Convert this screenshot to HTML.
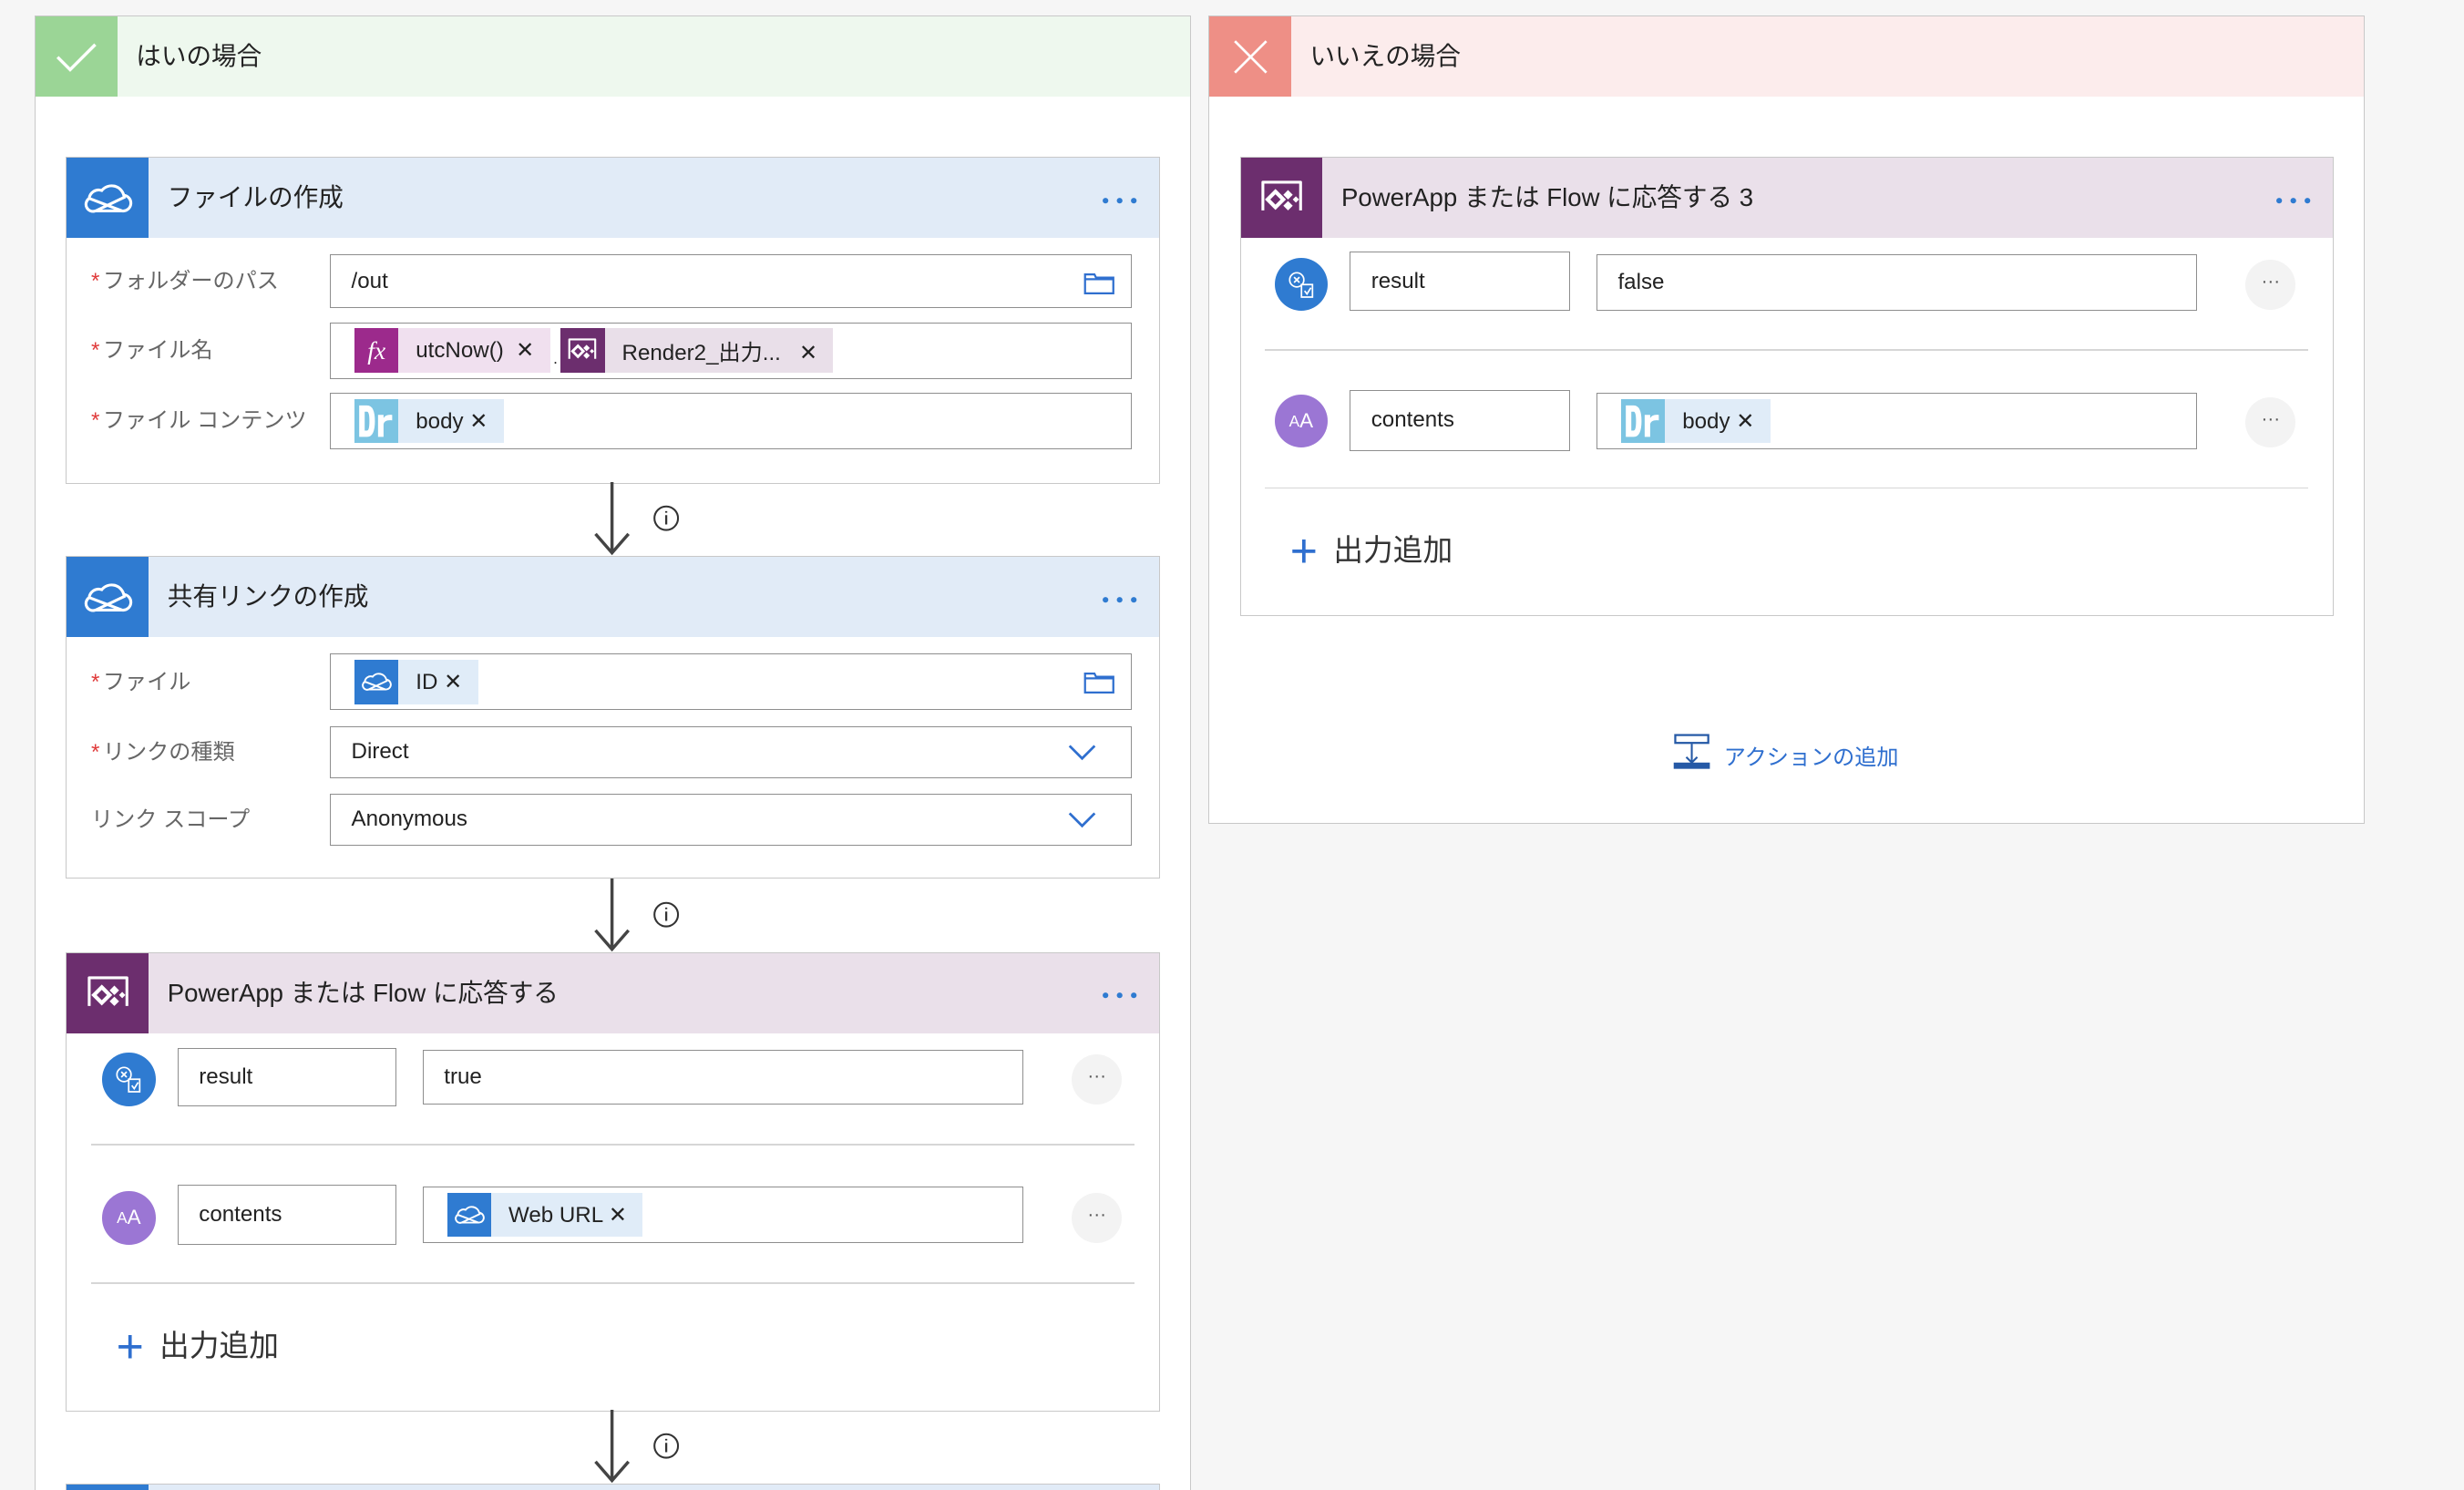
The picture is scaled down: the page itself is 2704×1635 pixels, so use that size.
<!DOCTYPE html>
<html><head><meta charset="utf-8"><style>
html,body{margin:0;padding:0;background:#f6f6f6;}
#w{position:relative;width:1568px;height:948px;zoom:1.72449;overflow:hidden;font-family:"Liberation Sans","Noto Sans CJK JP",sans-serif;color:#222;}
.a{position:absolute;box-sizing:border-box;}
.box{position:absolute;box-sizing:border-box;background:#fff;border:1px solid #c8c8c8;}
.hdr{position:absolute;left:0;right:0;top:0;height:51px;}
.ic{position:absolute;left:0;top:0;width:52px;height:51px;display:flex;align-items:center;justify-content:center;}
.ttl{position:absolute;left:64px;top:0;line-height:51px;font-size:16px;color:#222;}
.dots{position:absolute;right:13px;top:24px;}
.lbl{position:absolute;font-size:14px;color:#666;}
.lbl b{color:#e03a3a;font-weight:normal;margin-right:2px;}
.inp{position:absolute;box-sizing:border-box;border:1px solid #8e8e8e;background:#fff;font-size:14px;padding-left:13px;display:flex;align-items:center;}
.tok{display:inline-flex;align-items:center;height:28px;font-size:14px;margin-right:2px;}
.tok .ti{width:28px;height:28px;display:flex;align-items:center;justify-content:center;}
.tok .tt{padding:0 10px 0 11px;height:28px;display:flex;align-items:center;}
.circ{position:absolute;width:34px;height:34px;border-radius:50%;display:flex;align-items:center;justify-content:center;}
.eb{position:absolute;width:32px;height:32px;border-radius:50%;background:#f3f3f3;color:#555;font-size:12px;text-align:center;line-height:28px;}
.sep{position:absolute;height:1px;background:#d6d6d6;}
.plus{position:absolute;font-size:19px;color:#333;}
.plus span{color:#2f6fcf;font-size:30px;font-weight:200;vertical-align:-4px;margin-right:10px;}
</style></head><body><div id="w">

<svg width="0" height="0" style="position:absolute"><defs>
<symbol id="cloud" viewBox="0 0 32 24"><path d="M8 20 H25 A5 5 0 0 0 26 10 A8 8 0 0 0 12 7 A6 6 0 0 0 4 12 A4.5 4.5 0 0 0 8 20 Z M4 12 L25 20 M27 11 L8 20" fill="none" stroke="#fff" stroke-width="1.8"/></symbol>
<symbol id="pa" viewBox="0 0 32 28"><path d="M4 22 V4 H28 V22" fill="none" stroke="#fff" stroke-width="1.8" stroke-linejoin="round"/><path d="M12 10 L17 15 L12 20 L7 15 Z" fill="none" stroke="#fff" stroke-width="2.4"/><path d="M20 9 L23 12 L20 15 L17 12 Z M20 16 L23 19 L20 22 L17 19 Z M25 13 L27 15 L25 17 L23 15Z" fill="#fff"/></symbol>
<symbol id="dr" viewBox="0 0 28 28"><rect width="28" height="28" fill="#7cc4e2"/><path d="M3 4 H8 Q13 4 13 14 Q13 24 8 24 H3 Z M6.5 8 V20 H8 Q9.5 20 9.5 14 Q9.5 8 8 8Z" fill="#fff" fill-rule="evenodd"/><path d="M15 24 V10 H18.5 V12 Q20 9.5 24 10 V13.5 Q19 13 18.5 16 V24Z" fill="#fff"/></symbol>
<symbol id="dt" viewBox="0 0 24 6"><circle cx="3" cy="3" r="1.8" fill="#2f7bd1"/><circle cx="12" cy="3" r="1.8" fill="#2f7bd1"/><circle cx="21" cy="3" r="1.8" fill="#2f7bd1"/></symbol>
</defs></svg>

<!-- LEFT BRANCH -->
<div class="box" style="left:22px;top:10px;width:736px;height:960px;">
 <div class="hdr" style="background:#eef8ee;"><div class="ic" style="background:#9bd596;"><svg width="30" height="24"><path d="M3 12 L11 20 L27 4" fill="none" stroke="#fff" stroke-width="2"/></svg></div><div class="ttl">はいの場合</div></div>
</div>

<!-- card 1 -->
<div class="box" style="left:42px;top:100px;width:696px;height:208px;">
 <div class="hdr" style="background:#e1ebf7;"><div class="ic" style="background:#2f7bd1;"><svg width="32" height="24"><use href="#cloud"/></svg></div><div class="ttl">ファイルの作成</div><svg class="dots" width="24" height="6"><use href="#dt"/></svg></div>
</div>
<div class="lbl" style="left:58px;top:167px;"><b>*</b>フォルダーのパス</div>
<div class="inp" style="left:210px;top:162px;width:510px;height:34px;">/out<svg class="a" style="right:10px;top:9px" width="20" height="16"><path d="M1 3 H7 L8 5 H19 V15 H1 Z M1 6 H19" fill="none" stroke="#2f6fcf" stroke-width="1.3"/></svg></div>
<div class="lbl" style="left:58px;top:211px;"><b>*</b>ファイル名</div>
<div class="inp" style="left:210px;top:205px;width:510px;height:36px;padding-left:15px;">
 <span class="tok" style="background:#f0e0ef;"><span class="ti" style="background:#9c2a8c;color:#fff;font-family:'Liberation Serif',serif;font-style:italic;font-size:16px;">fx</span><span class="tt">utcNow() &nbsp;✕</span></span><span style="font-size:10px;align-self:flex-end;margin:0 2px 6px 0">.</span><span class="tok" style="background:#e9dfe9;"><span class="ti" style="background:#6c2e6e;"><svg width="22" height="20"><use href="#pa"/></svg></span><span class="tt">Render2_出力... &nbsp;&nbsp;✕</span></span>
</div>
<div class="lbl" style="left:58px;top:256px;"><b>*</b>ファイル コンテンツ</div>
<div class="inp" style="left:210px;top:250px;width:510px;height:36px;padding-left:15px;"><span class="tok" style="background:#e0ecf8;"><span class="ti"><svg width="28" height="28"><use href="#dr"/></svg></span><span class="tt">body ✕</span></span></div>

<svg class="a" style="left:370px;top:307px" width="80" height="48"><path d="M19.5 0 V45 M9 33 L19.5 45 L30 33" fill="none" stroke="#444" stroke-width="2"/><circle cx="54" cy="23" r="7.5" fill="none" stroke="#333" stroke-width="1.2"/><path d="M54 21 V27 M54 18.5 V19.5" stroke="#333" stroke-width="1.3"/></svg>

<!-- card 2 -->
<div class="box" style="left:42px;top:354px;width:696px;height:205px;">
 <div class="hdr" style="background:#e1ebf7;"><div class="ic" style="background:#2f7bd1;"><svg width="32" height="24"><use href="#cloud"/></svg></div><div class="ttl">共有リンクの作成</div><svg class="dots" width="24" height="6"><use href="#dt"/></svg></div>
</div>
<div class="lbl" style="left:58px;top:422px;"><b>*</b>ファイル</div>
<div class="inp" style="left:210px;top:416px;width:510px;height:36px;padding-left:15px;"><span class="tok" style="background:#e0ecf8;"><span class="ti" style="background:#2f7bd1;"><svg width="20" height="15"><use href="#cloud"/></svg></span><span class="tt">ID ✕</span></span><svg class="a" style="right:10px;top:9px" width="20" height="16"><path d="M1 3 H7 L8 5 H19 V15 H1 Z M1 6 H19" fill="none" stroke="#2f6fcf" stroke-width="1.3"/></svg></div>
<div class="lbl" style="left:58px;top:467px;"><b>*</b>リンクの種類</div>
<div class="inp" style="left:210px;top:462px;width:510px;height:33px;">Direct<svg class="a" style="right:22px;top:10px" width="18" height="12"><path d="M1 2 L9 10 L17 2" fill="none" stroke="#2f6fcf" stroke-width="1.6"/></svg></div>
<div class="lbl" style="left:58px;top:510px;">リンク スコープ</div>
<div class="inp" style="left:210px;top:505px;width:510px;height:33px;">Anonymous<svg class="a" style="right:22px;top:10px" width="18" height="12"><path d="M1 2 L9 10 L17 2" fill="none" stroke="#2f6fcf" stroke-width="1.6"/></svg></div>

<svg class="a" style="left:370px;top:559px" width="80" height="48"><path d="M19.5 0 V45 M9 33 L19.5 45 L30 33" fill="none" stroke="#444" stroke-width="2"/><circle cx="54" cy="23" r="7.5" fill="none" stroke="#333" stroke-width="1.2"/><path d="M54 21 V27 M54 18.5 V19.5" stroke="#333" stroke-width="1.3"/></svg>

<!-- card 3 -->
<div class="box" style="left:42px;top:606px;width:696px;height:292px;">
 <div class="hdr" style="background:#eae0ea;"><div class="ic" style="background:#6c2e6e;"><svg width="32" height="28"><use href="#pa"/></svg></div><div class="ttl">PowerApp または Flow に応答する</div><svg class="dots" width="24" height="6"><use href="#dt"/></svg></div>
</div>
<div class="circ" style="left:65px;top:670px;background:#2f7bd1;"><svg width="20" height="20"><circle cx="7" cy="7" r="4.5" fill="none" stroke="#fff" stroke-width="1"/><path d="M5.3 5.3 L8.7 8.7 M8.7 5.3 L5.3 8.7" stroke="#fff"/><path d="M10 10 H17 V18 H10 Z M12 14 L13.5 16 L16 12" fill="none" stroke="#fff" stroke-width="1"/></svg></div>
<div class="inp" style="left:113px;top:667px;width:139px;height:37px;">result</div>
<div class="inp" style="left:269px;top:668px;width:382px;height:35px;">true</div>
<div class="eb" style="left:682px;top:671px;">···</div>
<div class="sep" style="left:58px;top:728px;width:664px;"></div>
<div class="circ" style="left:65px;top:758px;background:#9b76d4;color:#fff;font-size:13px;"><span style="font-size:10px">A</span>A</div>
<div class="inp" style="left:113px;top:754px;width:139px;height:38px;">contents</div>
<div class="inp" style="left:269px;top:755px;width:382px;height:36px;padding-left:15px;"><span class="tok" style="background:#e0ecf8;"><span class="ti" style="background:#2f7bd1;"><svg width="20" height="15"><use href="#cloud"/></svg></span><span class="tt">Web URL ✕</span></span></div>
<div class="eb" style="left:682px;top:759px;">···</div>
<div class="sep" style="left:58px;top:816px;width:664px;"></div>
<div class="plus" style="left:74px;top:839px;"><span>+</span>出力追加</div>

<svg class="a" style="left:370px;top:897px" width="80" height="48"><path d="M19.5 0 V45 M9 33 L19.5 45 L30 33" fill="none" stroke="#444" stroke-width="2"/><circle cx="54" cy="23" r="7.5" fill="none" stroke="#333" stroke-width="1.2"/><path d="M54 21 V27 M54 18.5 V19.5" stroke="#333" stroke-width="1.3"/></svg>
<div class="box" style="left:42px;top:944px;width:696px;height:30px;border-top:1px solid #c8c8c8;"><div class="a" style="left:0;top:0;width:52px;height:10px;background:#2f7bd1"></div><div class="a" style="left:52px;right:0;top:0;height:10px;background:#e1ebf7"></div></div>

<!-- RIGHT BRANCH -->
<div class="box" style="left:769px;top:10px;width:736px;height:514px;">
 <div class="hdr" style="background:#fcecec;"><div class="ic" style="background:#ee8f86;"><svg width="26" height="26"><path d="M3 3 L23 23 M23 3 L3 23" stroke="#fff" stroke-width="1.6"/></svg></div><div class="ttl">いいえの場合</div></div>
</div>
<div class="box" style="left:789px;top:100px;width:696px;height:292px;">
 <div class="hdr" style="background:#eae0ea;"><div class="ic" style="background:#6c2e6e;"><svg width="32" height="28"><use href="#pa"/></svg></div><div class="ttl">PowerApp または Flow に応答する 3</div><svg class="dots" width="24" height="6"><use href="#dt"/></svg></div>
</div>
<div class="circ" style="left:811px;top:164px;background:#2f7bd1;"><svg width="20" height="20"><circle cx="7" cy="7" r="4.5" fill="none" stroke="#fff" stroke-width="1"/><path d="M5.3 5.3 L8.7 8.7 M8.7 5.3 L5.3 8.7" stroke="#fff"/><path d="M10 10 H17 V18 H10 Z M12 14 L13.5 16 L16 12" fill="none" stroke="#fff" stroke-width="1"/></svg></div>
<div class="inp" style="left:859px;top:160px;width:140px;height:38px;">result</div>
<div class="inp" style="left:1016px;top:162px;width:382px;height:36px;">false</div>
<div class="eb" style="left:1429px;top:165px;">···</div>
<div class="sep" style="left:805px;top:222px;width:664px;"></div>
<div class="circ" style="left:811px;top:251px;background:#9b76d4;color:#fff;font-size:13px;"><span style="font-size:10px">A</span>A</div>
<div class="inp" style="left:859px;top:248px;width:140px;height:39px;">contents</div>
<div class="inp" style="left:1016px;top:250px;width:382px;height:36px;padding-left:15px;"><span class="tok" style="background:#e0ecf8;"><span class="ti"><svg width="28" height="28"><use href="#dr"/></svg></span><span class="tt">body ✕</span></span></div>
<div class="eb" style="left:1429px;top:253px;">···</div>
<div class="sep" style="left:805px;top:310px;width:664px;"></div>
<div class="plus" style="left:821px;top:333px;"><span>+</span>出力追加</div>

<svg class="a" style="left:1064px;top:466px" width="26" height="26"><rect x="2" y="1.5" width="21" height="5" fill="none" stroke="#2559a6" stroke-width="1.3"/><path d="M12.5 7 V19 M9 15.5 L12.5 19 L16 15.5" fill="none" stroke="#2559a6" stroke-width="1.2"/><rect x="1" y="19" width="23" height="4" fill="#2559a6"/></svg>
<div class="a" style="left:1097px;top:470px;font-size:14px;color:#2f6fcf;">アクションの追加</div>

</div></body></html>
